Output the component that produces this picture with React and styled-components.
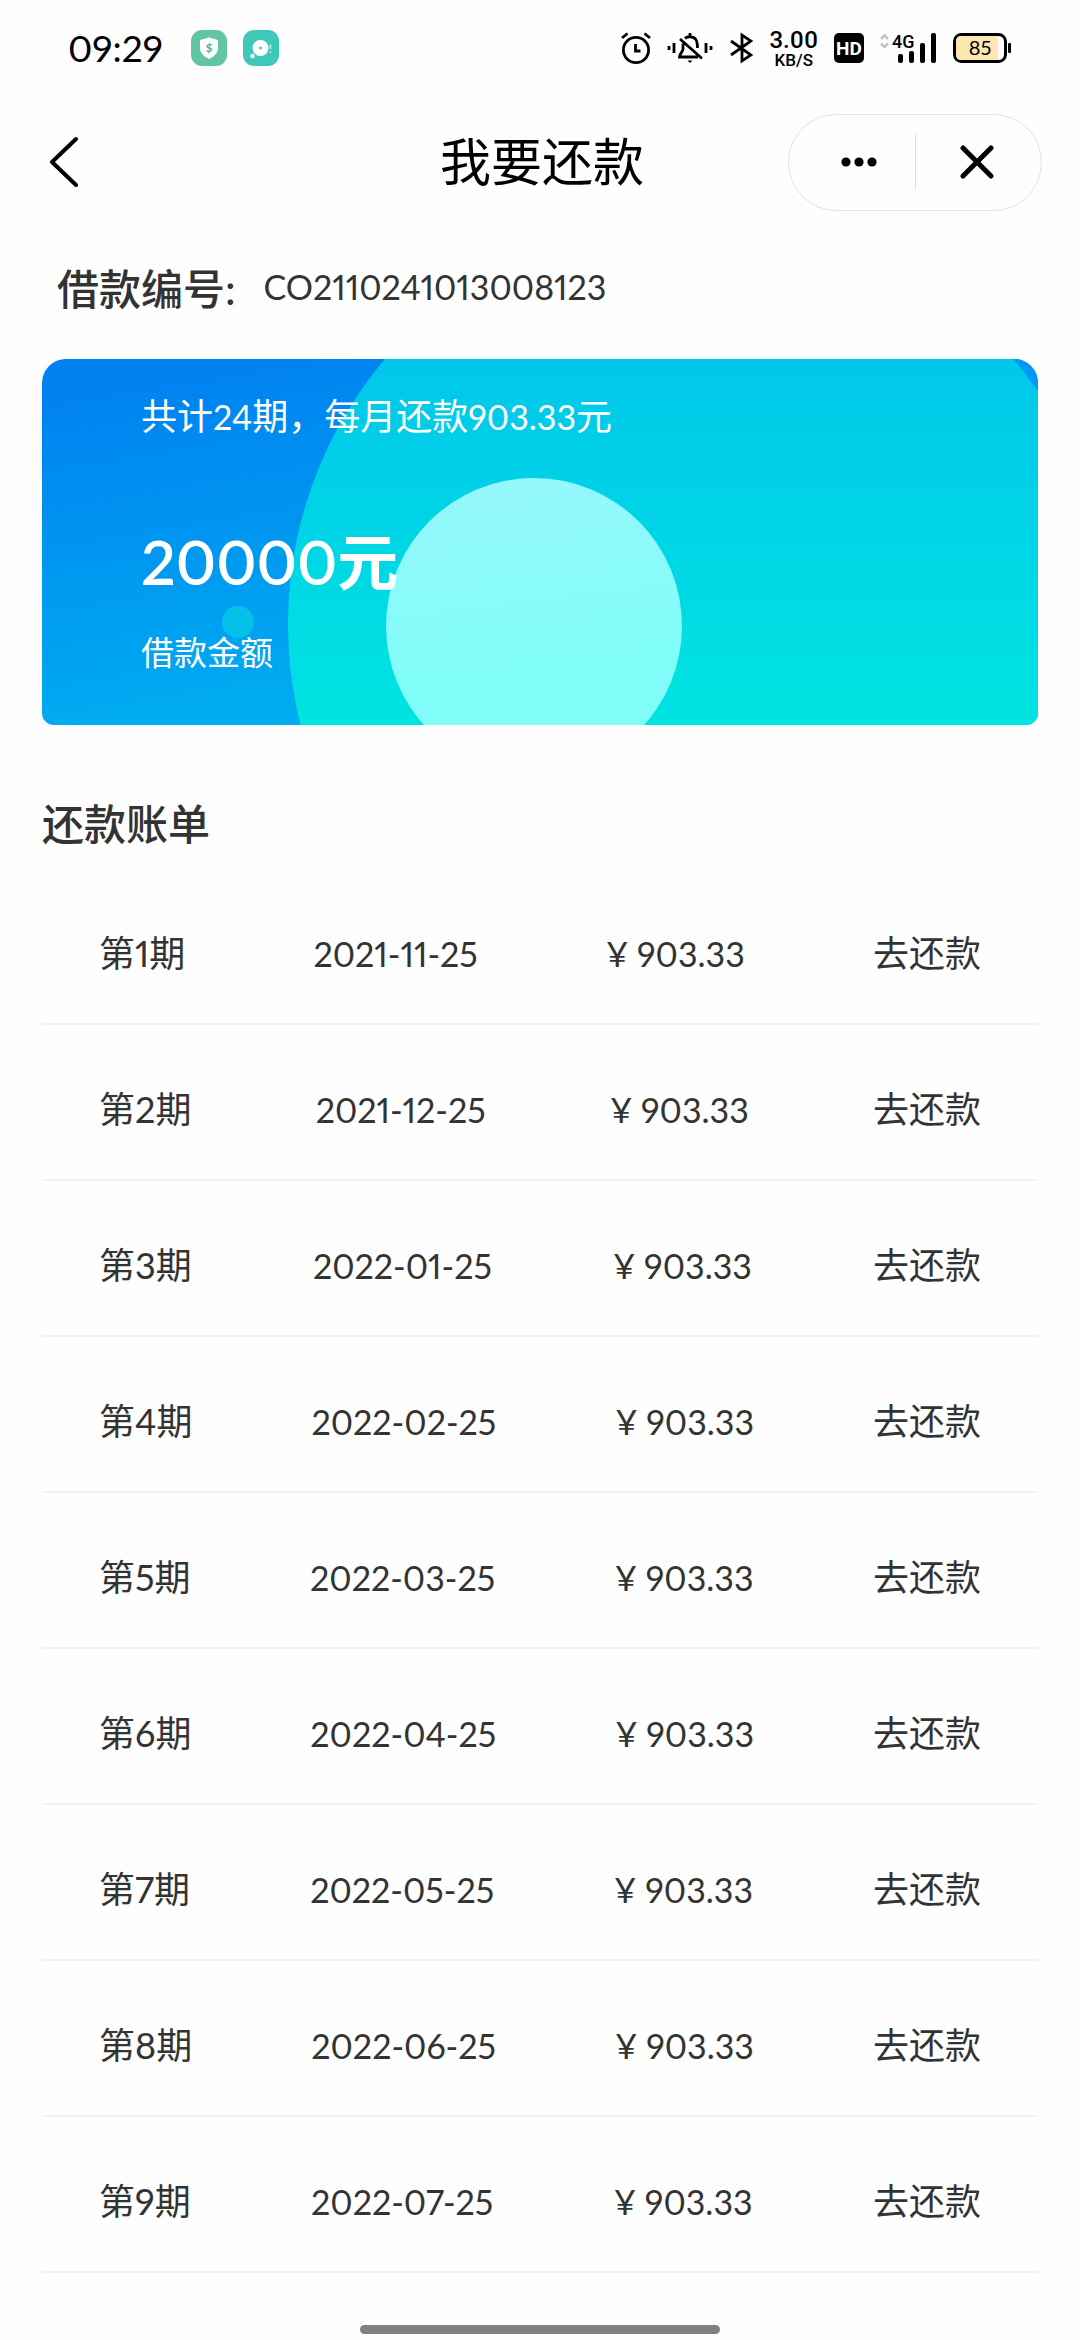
import React, { useState } from 'react';
import styled, { createGlobalStyle } from 'styled-components';

const GlobalStyle = createGlobalStyle`
* {
  box-sizing: border-box;
}
body {
  margin: 0;
  background: #fefefe;
  color: #333;
  font-family: Lato, "Noto Sans CJK SC", sans-serif;
  font-variant-numeric: proportional-nums;
}
button {
  border: 0;
  padding: 0;
  background: none;
  color: inherit;
  font: inherit;
  cursor: pointer;
}
svg {
  display: block;
  flex-shrink: 0;
}
`

const Page = styled.div`
display: flex;
flex-direction: column;
min-height: 100vh;
`

const StatusBar = styled.div`
display: flex;
justify-content: space-between;
align-items: center;
height: 96px;
padding: 0 68px;
color: #000;
`

const StatusLeft = styled.div`
display: flex;
align-items: center;
gap: 16px;
`

const Clock = styled.time`
margin-right: 12px;
font-size: 37px;
line-height: 40px;
`

const StatusRight = styled.div`
display: flex;
align-items: center;
gap: 16px;
`

const Speed = styled.div`
display: flex;
flex-direction: column;
align-items: center;
font-family: Roboto, sans-serif;
font-weight: 500;
`

const SpeedValue = styled.span`
font-size: 24px;
line-height: 24px;
`

const SpeedUnit = styled.span`
font-size: 17px;
line-height: 17px;
`

const NavBar = styled.header`
display: grid;
grid-template-columns: 1fr auto 1fr;
align-items: center;
height: 132px;
padding: 0 38px 0 42px;
color: #000;
`

const BackButton = styled.button`
justify-self: start;
padding: 8px;
`

const NavTitle = styled.h1`
margin: 0;
font-size: 51px;
font-weight: 400;
line-height: 72px;
`

const Capsule = styled.div`
justify-self: end;
display: flex;
align-items: center;
width: 254px;
height: 97px;
border: 1px solid #e2e2e2;
border-radius: 49px;
`

const CapsuleButton = styled.button`
display: flex;
justify-content: center;
align-items: center;
width: 50%;
height: 56px;
&:first-child {
  padding-left: 14px;
}
& + & {
  padding-right: 4px;
  border-left: 1px solid #e2e2e2;
}
`

const Content = styled.main`
padding: 0 42px;
`

const LoanNumber = styled.div`
display: flex;
align-items: center;
gap: 28px;
height: 131px;
padding: 0 15px 14px;
`

const LoanLabel = styled.span`
font-size: 42px;
font-weight: 500;
`

const Figures = styled.span`
font-size: 34px;
`

const Card = styled.section`
position: relative;
height: 366px;
padding: 30px 99px;
border-radius: 24px 24px 12px 12px;
overflow: hidden;
color: #fff;
`

const CardArt = styled.svg`
position: absolute;
inset: 0;
width: 100%;
height: 100%;
`

const CardText = styled.div`
position: relative;
`

const Plan = styled.p`
margin: 0 0 78px;
font-size: 36px;
line-height: 54px;
`

const Amount = styled.p`
margin: 0 0 26px;
font-size: 61px;
font-weight: 600;
line-height: 80px;
`

const AmountLabel = styled.p`
margin: 0;
font-size: 33px;
line-height: 48px;
`

const SectionTitle = styled.h2`
margin: 68px 0 14px;
font-size: 42px;
font-weight: 500;
line-height: 62px;
`

const Bills = styled.table`
display: block;
font-size: 36px;
line-height: 54px;
tbody {
  display: block;
}
`

const BillRow = styled.tr`
display: flex;
justify-content: space-between;
align-items: center;
height: 156px;
padding: 14px 57px 0;
border-bottom: 2px solid #f3f3f3;
`

const BillCell = styled.td`
padding: 0;
`

const HomeBar = styled.div`
width: 33.33%;
height: 9px;
margin: auto auto 6px;
border-radius: 5px;
background: #808080;
`

const bills = [
  { period: 1, date: '2021-11-25' },
  { period: 2, date: '2021-12-25' },
  { period: 3, date: '2022-01-25' },
  { period: 4, date: '2022-02-25' },
  { period: 5, date: '2022-03-25' },
  { period: 6, date: '2022-04-25' },
  { period: 7, date: '2022-05-25' },
  { period: 8, date: '2022-06-25' },
  { period: 9, date: '2022-07-25' },
]

const ShieldIcon = () => (
  <svg width="36" height="36" viewBox="0 0 36 36">
    <rect width="36" height="36" rx="11" fill="#62c6a4" />
    <path d="M18 7.500L27 10V18C27 23 23 26.500 18 29C13 26.500 9 23 9 18V10Z" fill="#fff" />
    <text x="18" y="22" fontSize="12" fontWeight="700" textAnchor="middle" fill="#45ba8f">$</text>
  </svg>
)

const DiscIcon = () => (
  <svg width="36" height="36" viewBox="0 0 36 36">
    <rect width="36" height="36" rx="11" fill="#3fc8b7" />
    <circle cx="17.500" cy="18" r="8" fill="#fff" />
    <circle cx="17.500" cy="18" r="1.500" fill="#3fc8b7" />
    <circle cx="9.500" cy="26" r="2.300" fill="#fff" />
    <path d="M27.500 14.500V19M27.500 21.500V23" stroke="#b5ebe3" strokeWidth="1.800" />
  </svg>
)

const AlarmIcon = () => (
  <svg width="30" height="32" viewBox="0 0 30 32" fill="none" stroke="#000" strokeWidth="2.800">
    <circle cx="15" cy="18" r="12.600" />
    <path d="M14.500 12V19H19.500M1 6L6.500 1.500M29 6L23.500 1.500" />
  </svg>
)

const MutedBellIcon = () => (
  <svg width="46" height="32" viewBox="0 0 46 32" fill="none" stroke="#000" strokeWidth="2.800">
    <path d="M2 14V18M7 11V21M39 11V21M44 14V18" />
    <path d="M18 6.500C20 4.200 26 4 28.500 7C30 9 30.500 11 30.500 16M16 11.500V17C16 20 12.500 21.500 12.500 25H31M13 7L35 26.500M23 1V4" />
    <path d="M20.500 28.500H25.500L23 31Z" fill="#000" stroke="none" />
  </svg>
)

const BluetoothIcon = () => (
  <svg width="24" height="32" viewBox="0 0 24 32" fill="none" stroke="#000" strokeWidth="2.800">
    <path d="M2 9L22 23L13 29V3L22 9L2 23" />
  </svg>
)

const HdIcon = () => (
  <svg width="30" height="30" viewBox="0 0 30 30">
    <rect width="30" height="30" rx="5" fill="#000" />
    <text x="15" y="22" fontFamily="Roboto" fontSize="19" fontWeight="700" textAnchor="middle" fill="#fff">HD</text>
  </svg>
)

const SignalIcon = () => (
  <svg width="57" height="38" viewBox="0 -4 57 38">
    <path d="M1 6L4.500 2.500L8 6M1 10.500L4.500 14L8 10.500" fill="none" stroke="#c4c4c4" strokeWidth="2.500" />
    <text x="12" y="15" fontFamily="Roboto" fontSize="18" fontWeight="500">4G</text>
    <rect x="18" y="21" width="5" height="9" rx="2" />
    <rect x="29" y="18" width="5" height="12" rx="2" />
    <rect x="40" y="10" width="5" height="20" rx="2" />
    <rect x="51" y="0" width="5" height="30" rx="2" />
  </svg>
)

const BatteryIcon = () => (
  <svg width="59" height="30" viewBox="0 0 59 30">
    <rect x="1.500" y="1.500" width="51" height="27" rx="7" fill="#fff" stroke="#000" strokeWidth="3" />
    <path d="M8 3H45V27H8C5 27 3 25 3 22V8C3 5 5 3 8 3Z" fill="#fce7b2" />
    <rect x="55" y="10" width="3" height="10" rx="1" />
    <text x="27" y="22" fontSize="20" textAnchor="middle">85</text>
  </svg>
)

const BackIcon = () => (
  <svg width="30" height="52" viewBox="0 0 30 52" fill="none" stroke="#000" strokeWidth="4" strokeLinecap="round" strokeLinejoin="round">
    <path d="M26 3L2 26L26 49" />
  </svg>
)

const MoreIcon = () => (
  <svg width="36" height="10" viewBox="0 0 36 10">
    <circle cx="5" cy="5" r="4.600" />
    <circle cx="18" cy="5" r="4.600" />
    <circle cx="31" cy="5" r="4.600" />
  </svg>
)

const CloseIcon = () => (
  <svg width="34" height="34" viewBox="0 0 34 34" stroke="#000" strokeWidth="5" strokeLinecap="round">
    <path d="M3 3L31 31M31 3L3 31" />
  </svg>
)

const CardBackground = () => (
  <CardArt viewBox="0 0 996 366" preserveAspectRatio="none" aria-hidden="true">
    <defs>
      <linearGradient id="base" x1="0" y1="0" x2="60" y2="366" gradientUnits="userSpaceOnUse">
        <stop offset="0.100" stopColor="#0082f0" />
        <stop offset="1" stopColor="#00abf0" />
      </linearGradient>
      <linearGradient id="big" x1="0" y1="0" x2="0" y2="366" gradientUnits="userSpaceOnUse">
        <stop offset="0" stopColor="#00c7ea" />
        <stop offset="1" stopColor="#00e4e1" />
      </linearGradient>
      <linearGradient id="small" x1="0" y1="119" x2="30" y2="366" gradientUnits="userSpaceOnUse">
        <stop offset="0" stopColor="#9cf6ff" />
        <stop offset="1" stopColor="#80fdf8" />
      </linearGradient>
    </defs>
    <rect width="996" height="366" fill="url(#base)" />
    <path d="M940 0H996V60Z" fill="#0098f7" />
    <circle cx="657" cy="265" r="411" fill="url(#big)" />
    <circle cx="492" cy="267" r="148" fill="url(#small)" />
    <circle cx="196" cy="263" r="16" fill="#04c1ea" />
  </CardArt>
)

const App = () => {

    const [selected, setSelected] = useState(null)

    return (
        <Page>
            <GlobalStyle />
            <StatusBar>
                <StatusLeft>
                    <Clock>09:29</Clock>
                    <ShieldIcon />
                    <DiscIcon />
                </StatusLeft>
                <StatusRight>
                    <AlarmIcon />
                    <MutedBellIcon />
                    <BluetoothIcon />
                    <Speed>
                        <SpeedValue>3.00</SpeedValue>
                        <SpeedUnit>KB/S</SpeedUnit>
                    </Speed>
                    <HdIcon />
                    <SignalIcon />
                    <BatteryIcon />
                </StatusRight>
            </StatusBar>
            <NavBar>
                <BackButton aria-label="返回"><BackIcon /></BackButton>
                <NavTitle>我要还款</NavTitle>
                <Capsule>
                    <CapsuleButton aria-label="更多"><MoreIcon /></CapsuleButton>
                    <CapsuleButton aria-label="关闭"><CloseIcon /></CapsuleButton>
                </Capsule>
            </NavBar>
            <Content>
                <LoanNumber>
                    <LoanLabel>借款编号:</LoanLabel>
                    <Figures>CO2110241013008123</Figures>
                </LoanNumber>
                <Card>
                    <CardBackground />
                    <CardText>
                        <Plan>共计<Figures>24</Figures>期，每月还款<Figures>903.33</Figures>元</Plan>
                        <Amount>20000元</Amount>
                        <AmountLabel>借款金额</AmountLabel>
                    </CardText>
                </Card>
                <SectionTitle>还款账单</SectionTitle>
                <Bills>
                    <tbody>
                        {bills.map((bill) => (
                            <BillRow key={bill.period} aria-selected={selected === bill.period}>
                                <BillCell>第{bill.period}期</BillCell>
                                <BillCell><Figures>{bill.date}</Figures></BillCell>
                                <BillCell><Figures>¥ 903.33</Figures></BillCell>
                                <BillCell>
                                    <button onClick={() => setSelected(bill.period)}>去还款</button>
                                </BillCell>
                            </BillRow>
                        ))}
                    </tbody>
                </Bills>
            </Content>
            <HomeBar />
        </Page>
    )
}

export default App;
